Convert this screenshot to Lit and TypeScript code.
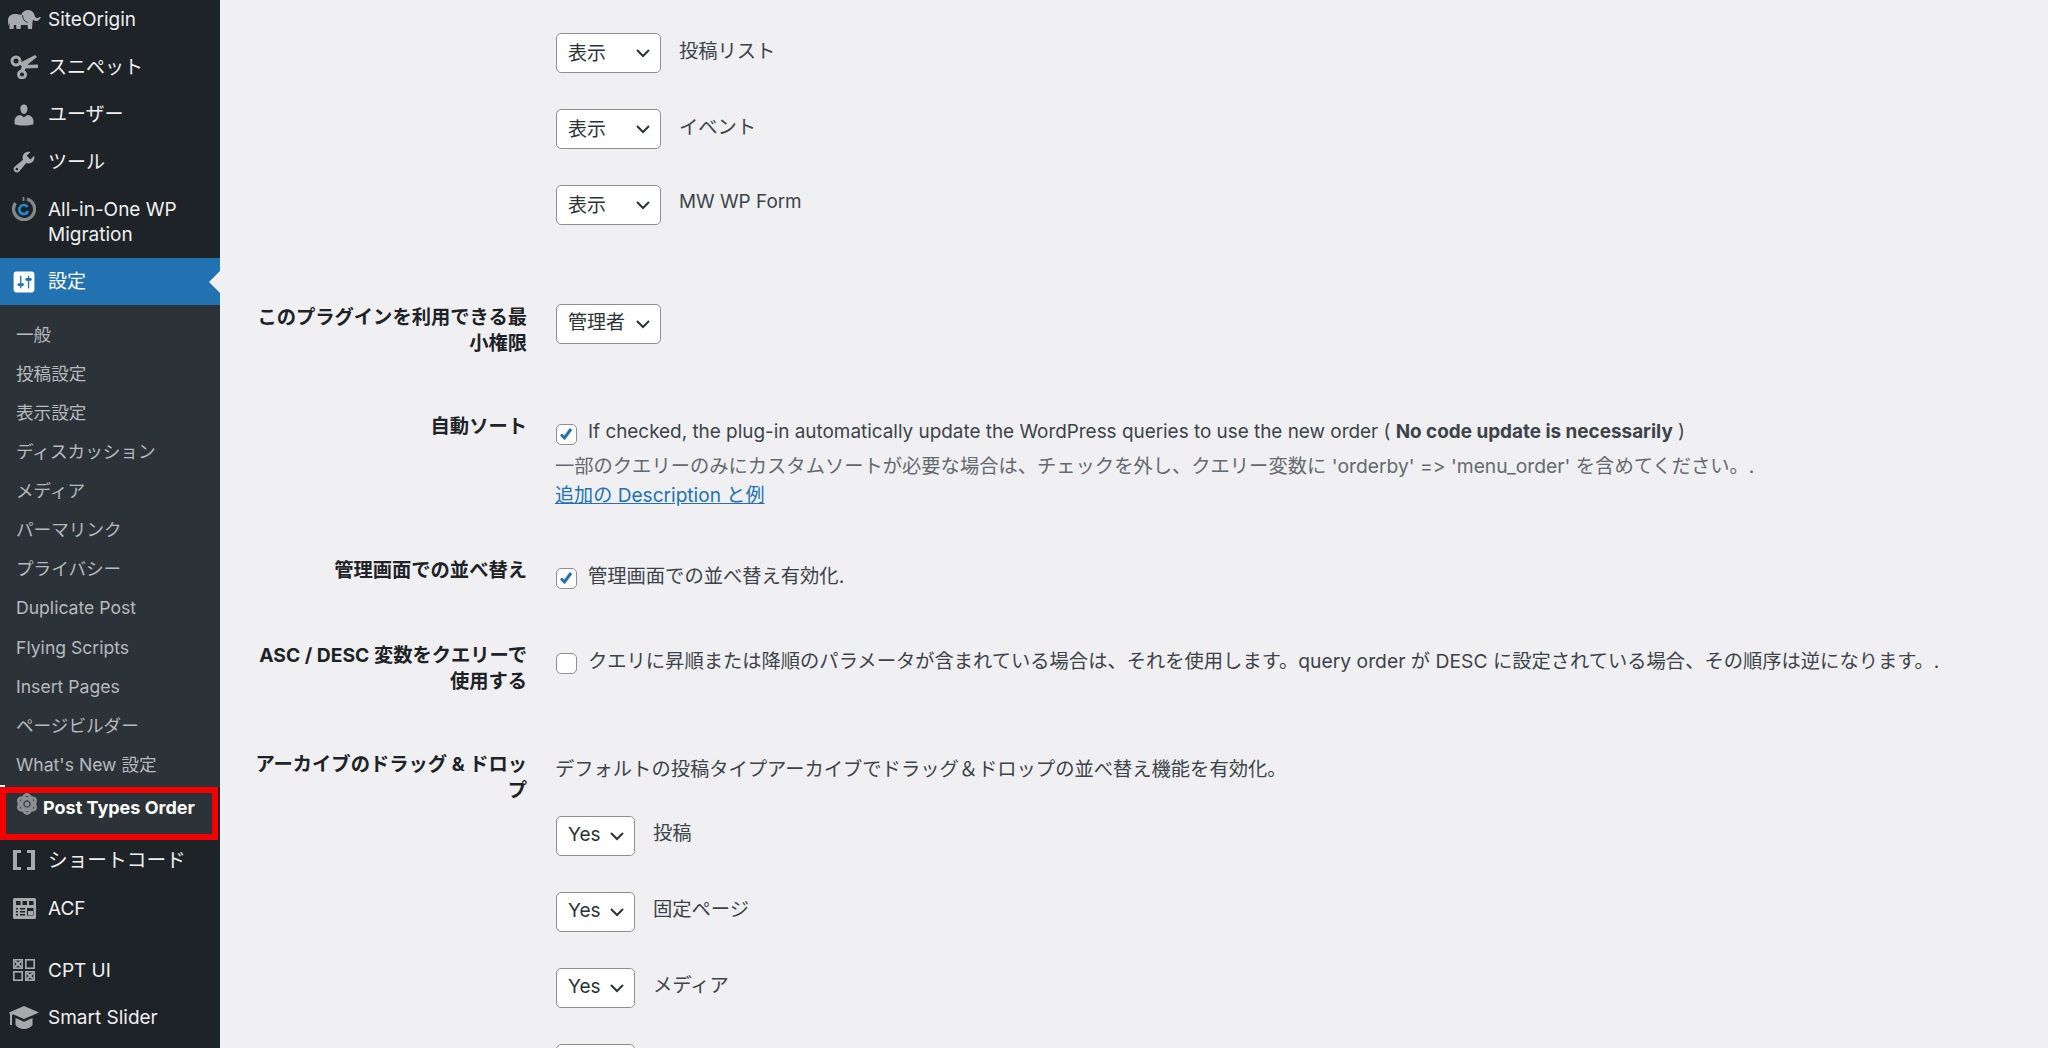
import { LitElement, html, css, svg } from "lit";
import { customElement } from "lit/decorators.js";

const icons: Record<string, unknown> = {
  elephant: svg`<svg class="ic" style="width:33px;height:20px" viewBox="0 0 33 20"><path fill="currentColor" d="M0 11C0 6 3 4 7 4c2 0 4 1 6.500.5C14.500 1.500 17 0 20 0c3 0 5.500 1.500 6.500 5 .5 2 1.500 3.500 3 3 1-.3 1.500-1 3.500-1-1 2-2.500 4-4.500 4-1.500 0-2.500-.5-3.500-1.500L24.500 12 24 19h-4l-.5-4H13l-.5 4h-4L8 15H6l-.5 4h-4v-6l-1 3z"/><path fill="none" stroke="#1d2327" stroke-width=".9" d="M14.500 5c0 4 2 6.500 5 7.500"/></svg>`,
  scissors: svg`<svg class="ic" style="width:28px;height:24px" viewBox="0 0 28 24"><g fill="none" stroke="currentColor" stroke-width="3"><circle cx="6" cy="6" r="4"/><circle cx="12" cy="19.500" r="3.500"/></g><path fill="currentColor" d="M8.500 8.500 25 0l2 2-13.500 11zM12 10l16-.5V13l-12.500.5-1.500 3.500-3.500-1z"/></svg>`,
  user: svg`<svg class="ic" style="width:26px;height:26px" viewBox="0 0 20 20"><path fill="currentColor" d="M10 9.250c-2.270 0-2.730-3.440-2.730-3.440C7 4.020 7.820 2 9.970 2c2.160 0 2.980 2.020 2.710 3.810 0 0-.41 3.440-2.680 3.440zm0 2.570L12.720 10c2.390 0 4.520 2.330 4.520 4.530v2.490s-3.650 1.130-7.240 1.130c-3.650 0-7.240-1.130-7.240-1.130v-2.490c0-2.250 1.940-4.480 4.470-4.480z"/></svg>`,
  tools: svg`<svg class="ic" style="width:26px;height:26px" viewBox="0 0 20 20"><path fill="currentColor" d="M16.680 9.770c-1.340 1.340-3.300 1.670-4.950.99l-5.410 6.520c-.99.99-2.590.99-3.580 0s-.99-2.590 0-3.570l6.520-5.420c-.68-1.650-.35-3.610.99-4.950 1.280-1.280 3.120-1.620 4.720-1.060l-2.890 2.890 2.820 2.820 2.860-2.870c.53 1.580.18 3.390-1.080 4.650zM3.810 16.210c.4.39 1.040.39 1.430 0 .4-.4.4-1.040 0-1.430-.39-.4-1.030-.4-1.430 0-.39.39-.39 1.030 0 1.430z"/></svg>`,
  aio: svg`<svg class="ic" style="width:24px;height:24px" viewBox="0 0 24 24"><path fill="none" stroke="#85888a" stroke-width="3.200" d="M15 2A10.500 10.500 0 1 1 3.500 6"/><path fill="none" stroke="#85888a" stroke-width="1.800" d="M11.500 0v4"/><path fill="none" stroke="#1a8fd0" stroke-width="2.600" d="M15.500 10A4.500 4.500 0 1 0 16 14"/></svg>`,
  settings: svg`<svg class="ic" style="width:26px;height:26px;color:#fff" viewBox="0 0 20 20"><path fill="currentColor" d="M18 16V4c0-1.100-.9-2-2-2H4c-1.100 0-2 .9-2 2v12c0 1.100.9 2 2 2h12c1.100 0 2-.9 2-2zM8 11h1c.55 0 1 .45 1 1s-.45 1-1 1H8v1.500c0 .28-.22.5-.5.5s-.5-.22-.5-.5V13H6c-.55 0-1-.45-1-1s.45-1 1-1h1V5.500c0-.28.22-.5.5-.5s.5.22.5.5V11zm5-2h-1c-.55 0-1-.45-1-1s.45-1 1-1h1V5.500c0-.28.22-.5.5-.5s.5.22.5.5V7h1c.55 0 1 .45 1 1s-.45 1-1 1h-1v5.500c0 .28-.22.5-.5.5s-.5-.22-.5-.5V9z"/></svg>`,
  atom: svg`<svg class="atom" viewBox="0 0 24 22"><g fill="none" stroke="#8d9093" stroke-width="2.800"><ellipse cx="12" cy="11" rx="5" ry="9.500"/><ellipse cx="12" cy="11" rx="5" ry="9.500" transform="rotate(60 12 11)"/><ellipse cx="12" cy="11" rx="5" ry="9.500" transform="rotate(120 12 11)"/></g><circle cx="12" cy="11" r="2.500" fill="#8d9093"/></svg>`,
  brackets: svg`<svg class="ic" style="width:22px;height:20px" viewBox="0 0 22 20"><path fill="currentColor" d="M0 0h8v3H4v14h4v3H0zM22 0h-8v3h4v14h-4v3h8z"/></svg>`,
  acf: svg`<svg class="ic" style="width:23px;height:21px" viewBox="0 0 23 21"><path fill="currentColor" fill-rule="evenodd" d="M1.500 0h20A1.500 1.500 0 0 1 23 1.500v18a1.500 1.500 0 0 1-1.500 1.500h-20A1.500 1.500 0 0 1 0 19.500v-18A1.500 1.500 0 0 1 1.500 0zM3 3v4h4.500V3zm6.500 0v4H14V3zM16 3v4h4.500V3zM3 10v1.500h2V10zm4 0v1.500h5V10zM3 13v1.500h2V13zm4 0v1.500h5V13zM3 16v1.500h2V16zm4 0v1.500h5V16zm7-6v7.500h6.500V10z"/><path fill="currentColor" d="M15 13h5v4h-5z"/></svg>`,
  cpt: svg`<svg class="ic" style="width:22px;height:22px" viewBox="0 0 22 22"><g fill="none" stroke="currentColor" stroke-width="1.600"><rect x=".8" y=".8" width="8.400" height="8.400"/><rect x="12.800" y=".8" width="8.400" height="8.400"/><rect x=".8" y="12.800" width="8.400" height="8.400"/><rect x="12.800" y="12.800" width="8.400" height="8.400"/><path d="M2 2l6 6M8 2l-6 6M14 14l6 6M20 14l-6 6" stroke-width="1.800"/></g></svg>`,
  cap: svg`<svg class="ic" style="width:30px;height:23px" viewBox="0 0 30 23"><path fill="currentColor" d="M15 0 30 6.500 15 13 4 8.300 3 9.500V19H1V8.500L0 6.500zM6.500 12 15 15.700 23.500 12v7c-2 2.500-5 4-8.500 4s-6.500-1.500-8.500-4z"/></svg>`,
};

const subItems = ["一般", "投稿設定", "表示設定", "ディスカッション", "メディア", "パーマリンク", "プライバシー", "Duplicate Post", "Flying Scripts", "Insert Pages", "ページビルダー", "What's New 設定"];

@customElement("app-root")
export class AppRoot extends LitElement {
  static styles = css`
    :host { display: block; width: 2048px; height: 1048px; overflow: hidden; background: #f0f0f2;
      font-family: "Inter", "Liberation Sans", "Noto Sans CJK JP", sans-serif; font-size: 19.300px; color: #3c434a; font-feature-settings: "calt" 0, "liga" 0; }
    .page { display: flex; height: 1048px; }
    .side { width: 220px; flex: none; background: #1d2327; color: #f0f0f1; overflow: hidden; font-size: 19px; }
    .menu { margin-top: -4px; display: flex; flex-direction: column; }
    .item { height: 47.500px; display: flex; align-items: center; position: relative; }
    .item span { line-height: 25px; }
    .icw { width: 48px; flex: none; display: flex; justify-content: center; color: #a7aaad; }
    .ic { display: block; }
    .aio { height: 72.300px; align-items: flex-start; padding-top: 11px; box-sizing: border-box; }
    .active { background: #2271b1; color: #fff; height: 47px; }
    .active::after { content: ""; position: absolute; right: 0; top: 13px; border: 11px solid transparent; border-left: 0; border-right-color: #f0f0f2; }
    .sub { background: #2c3338; padding: 9.500px 0 3.300px; }
    .sub div { height: 39.100px; line-height: 39px; padding-left: 16px; color: #b6babe; font-size: 17.600px; }
    .pto { height: 53px; box-sizing: border-box; margin-right: 2px; border: 6px solid #f40000; background: #2c3338; color: #fff; font-weight: 700; font-size: 18px; display: flex; position: relative; }
    .pto::before { content: ""; position: absolute; left: -6px; top: -8px; width: 5px; height: 2px; background: #fff; }
    .atom { width: 24px; height: 22px; margin: 0 4px 0 9px; flex: none; display: block; }
    .pto span { line-height: 30px; }
    .short { height: 40px; }
    .short span { font-size: 19.700px; }
    .acfi { margin-top: 4.500px; height: 47px; }
    .cpti { margin-top: 15px; height: 47px; }
    .main { flex: 1; min-width: 0; padding-top: 33px; }
    .selrow { display: flex; align-items: center; gap: 18px; height: 40px; margin-left: 336px; }
    .selrow + .selrow { margin-top: 36px; }
    .selrow span.l { position: relative; top: -3.500px; }
    .selrow span.lat { font-size: 18.900px; }
    .latin { font-size: 18.900px; }
    .sel { box-sizing: border-box; height: 40px; width: 105px; background: #fff; border: 1.500px solid #8c8f94; border-radius: 5px; color: #2c3338; display: flex; align-items: center; padding: 0 11px 3px; position: relative; flex: none; font-size: 19px; }
    .sel svg { position: absolute; right: 9px; top: 14px; width: 16px; height: 10px; }
    .sel.w-yes { width: 79px; padding-bottom: 2px; }
    .row { display: grid; grid-template-columns: 336px 1fr; line-height: 26px; }
    .th { text-align: right; padding-right: 29px; font-weight: 700; color: #1d2327; font-size: 19.300px; white-space: nowrap; }
    .first { margin-top: 79px; }
    .td { min-width: 0; }
    .chk { display: flex; align-items: center; height: 26px; gap: 11px; white-space: nowrap; }
    .chk span { position: relative; top: -1px; }
    .box { width: 21px; height: 21px; box-sizing: border-box; background: #fff; border: 1.500px solid #8c8f94; border-radius: 5px; flex: none; position: relative; top: 1px; }
    .box svg { position: absolute; left: 0; top: 0; width: 18px; height: 18px; }
    .desc { color: #646970; margin: 7px 0 0 -1px; white-space: nowrap; }
    a { color: #2271b1; text-decoration: underline; display: block; margin: 3px 0 0 -1px; font-size: 19.100px; }
    .r2 { margin-top: 57px; }
    .r3 { margin-top: 49px; }
    .r4 { margin-top: 52px; }
    .r5 { margin-top: 57px; }
    .pad7 { padding-top: 7px; }
    .arch { padding-top: 6px; }
    .arch > div:first-child { margin-left: -1px; position: relative; top: -1px; }
    .sels { margin-top: 33px; }
    .sels .selrow { margin-left: 0; }
  `;

  private chev() {
    return html`<svg viewBox="0 0 16 10"><path d="M2 2l6 6 6-6" fill="none" stroke="#2c3338" stroke-width="2"/></svg>`;
  }
  private sel(text: string, label: string, cls = "", labelCls = "") {
    return html`<div class="selrow"><div class="sel ${cls}">${text}${this.chev()}</div><span class="l ${labelCls}">${label}</span></div>`;
  }
  private item(icon: string, text: string, cls = "") {
    return html`<div class="item ${cls}"><div class="icw">${icons[icon]}</div><span>${text}</span></div>`;
  }
  private box(checked: boolean) {
    return html`<div class="box">${checked ? html`<svg viewBox="0 0 18 18"><path d="M4 9.500l3.500 3.500L14 4" fill="none" stroke="#2271b1" stroke-width="3"/></svg>` : ""}</div>`;
  }

  render() {
    return html`<div class="page">
      <nav class="side"><div class="menu">
        ${this.item("elephant", "SiteOrigin")}
        ${this.item("scissors", "スニペット")}
        ${this.item("user", "ユーザー")}
        ${this.item("tools", "ツール")}
        <div class="item aio"><div class="icw">${icons.aio}</div><span>All-in-One WP<br />Migration</span></div>
        ${this.item("settings", "設定", "active")}
        <div class="sub">${subItems.map((s) => html`<div>${s}</div>`)}</div>
        <div class="pto">${icons.atom}<span>Post Types Order</span></div>
        ${this.item("brackets", "ショートコード", "short")}
        ${this.item("acf", "ACF", "acfi")}
        ${this.item("cpt", "CPT UI", "cpti")}
        ${this.item("cap", "Smart Slider")}
      </div></nav>
      <main class="main">
        ${this.sel("表示", "投稿リスト")}
        ${this.sel("表示", "イベント")}
        ${this.sel("表示", "MW WP Form", "", "lat")}
        <div class="row first">
          <div class="th">このプラグインを利用できる最<br />小権限</div>
          <div class="td"><div class="sel">管理者${this.chev()}</div></div>
        </div>
        <div class="row r2">
          <div class="th">自動ソート</div>
          <div class="td pad7">
            <div class="chk latin">${this.box(true)}<span>If checked, the plug-in automatically update the WordPress queries to use the new order ( <b>No code update is necessarily</b> )</span></div>
            <div class="desc">一部のクエリーのみにカスタムソートが必要な場合は、チェックを外し、クエリー変数に 'orderby' =&gt; 'menu_order' を含めてください。.</div>
            <a href="#">追加の Description と例</a>
          </div>
        </div>
        <div class="row r3">
          <div class="th">管理画面での並べ替え</div>
          <div class="td pad7"><div class="chk">${this.box(true)}<span>管理画面での並べ替え有効化.</span></div></div>
        </div>
        <div class="row r4">
          <div class="th">ASC / DESC 変数をクエリーで<br />使用する</div>
          <div class="td pad7"><div class="chk">${this.box(false)}<span>クエリに昇順または降順のパラメータが含まれている場合は、それを使用します。query order が DESC に設定されている場合、その順序は逆になります。.</span></div></div>
        </div>
        <div class="row r5">
          <div class="th">アーカイブのドラッグ & ドロッ<br />プ</div>
          <div class="td arch">
            <div>デフォルトの投稿タイプアーカイブでドラッグ＆ドロップの並べ替え機能を有効化。</div>
            <div class="sels">
              ${this.sel("Yes", "投稿", "w-yes")}
              ${this.sel("Yes", "固定ページ", "w-yes")}
              ${this.sel("Yes", "メディア", "w-yes")}
              ${this.sel("", "", "w-yes")}
            </div>
          </div>
        </div>
      </main>
    </div>`;
  }
}
